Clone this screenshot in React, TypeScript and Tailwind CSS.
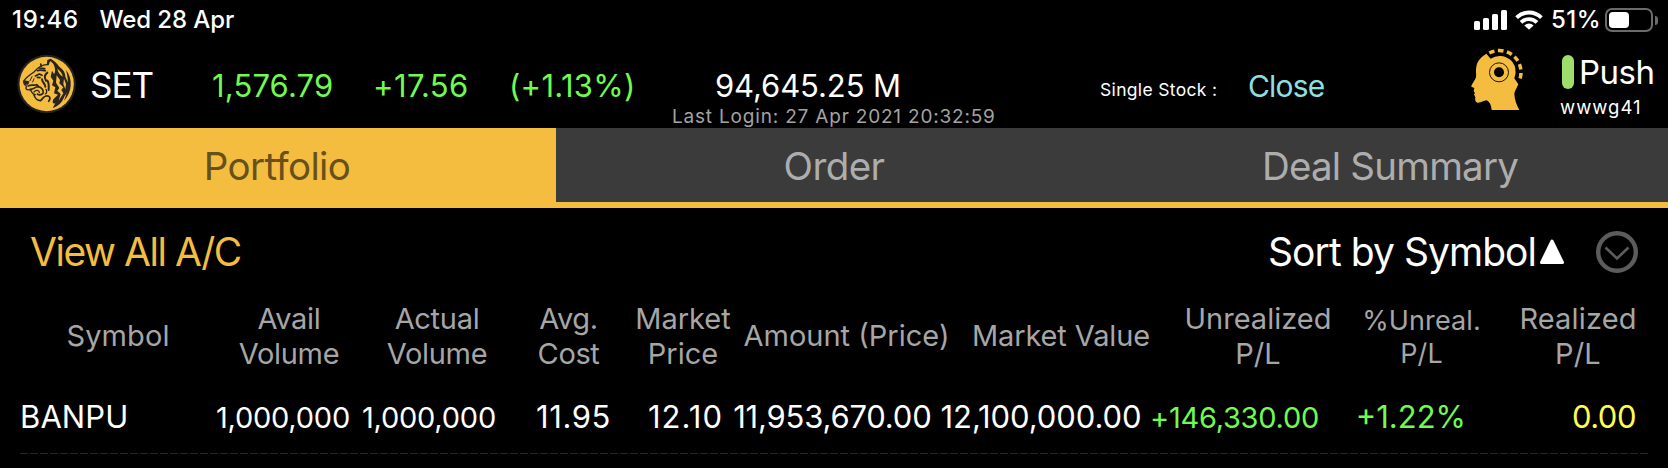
import React from "react";

function TigerLogo() {
  return (
    <svg viewBox="0 0 240 228" className="h-[76px] w-20 shrink-0">
      <circle cx="116" cy="114" r="88" fill="#24211f" />
      <circle cx="116" cy="114" r="81.5" fill="#f4bd40" />
      <g fill="#2a2420">
        <path d="M116 58 L118 42 L128 38 C142 46 148 54 154 62 C166 70 172 80 172 92 L182 114 C182 130 178 140 170 150 C162 170 152 180 134 186 L142 172 C134 174 132 170 136 160 L150 146 L138 142 L142 124 L132 118 L136 104 L128 92 L132 74 L138 84 C142 80 142 72 140 64 C138 54 132 48 126 46 L122 58 Z" />
        <path d="M174 72 C194 96 194 138 168 164 C180 136 184 106 174 72 Z" />
      </g>
      <g fill="#f4bd40">
        <path d="M148 68 C158 76 164 84 164 92 C156 86 150 80 148 68 Z" />
        <path d="M146 88 L156 102 L154 112 L166 124 L160 132 L166 142 L152 164 L158 144 L148 134 L154 126 L144 110 Z" />
        <path d="M168 98 L174 114 L172 130 L166 114 Z" />
      </g>
      <g fill="none" stroke="#2a2420" strokeWidth="4" strokeLinecap="round" strokeLinejoin="round">
        <path d="M116 56 C100 56 88 66 78 78 C66 86 52 96 47 106" strokeWidth="4" />
        <path d="M47 106 C47 112 51 118 55 120 L54 128 C58 134 64 132 70 130" />
        <path d="M49 105 L62 108 L59 114 L52 114 Z" fill="#2a2420" />
        <path d="M60 120 C72 114 80 120 86 116 L92 122 M66 130 C76 132 80 122 90 122 C102 124 108 134 105 142 C98 148 92 148 88 144" strokeWidth="5" />
        <path d="M68 132 C72 142 76 146 82 146 M78 138 C84 130 94 132 94 140" />
        <path d="M78 146 C80 156 88 164 98 164 C104 158 106 152 114 150 C124 148 130 156 122 166" strokeWidth="5" />
        <path d="M94 66 L110 68 M88 74 C96 70 104 74 112 74 M98 54 L100 60" strokeWidth="5" />
        <path d="M82 90 L94 84 L102 88 M88 94 L96 95" strokeWidth="5" />
        <path d="M72 92 L66 104 M78 98 L74 108" strokeWidth="3" />
        <path d="M118 80 C110 86 108 94 114 104 M102 100 C102 110 112 112 112 122 M118 104 C124 112 122 120 122 132" strokeWidth="6" />
        <path d="M114 130 C118 136 116 142 112 144" />
      </g>
    </svg>
  );
}

function HeadIcon() {
  return (
    <svg viewBox="0 0 198 210" className="h-[70px] w-[66px] shrink-0">
      <path
        d="M67 29 L80 44 A48 48 0 0 1 151 103 L163 121 C158 132 152 142 151 150 C152 168 158 184 166 198 L83 198 C82 186 78 174 68 169 C58 169 50 178 40 176 C33 174 33 168 34 160 L30 151 L33 147 L29 142 L31 132 L22 128 C22 122 30 114 36 100 C38 92 34 82 37 68 C40 50 52 38 67 29 Z"
        fill="#f4bd40"
      />
      <path d="M76 27 A65 65 0 0 1 165 112" fill="none" stroke="#f4bd40" strokeWidth="10.5" strokeDasharray="16.5 10.5" />
      <circle cx="105" cy="85" r="28.5" fill="none" stroke="#1c1608" strokeWidth="3" />
      <circle cx="105" cy="85" r="15" fill="#000" />
    </svg>
  );
}

function StatusBar() {
  return (
    <div className="flex h-10 items-center text-2xl leading-10 font-medium text-white">
      <span className="w-[87.5px] pl-3 tracking-[0.72px]">19:46</span>
      <span className="pl-3 tracking-[-0.1px]">Wed 28 Apr</span>
      <div className="ml-auto flex h-10 w-[194px] items-center">
        <svg viewBox="0 0 34 22" className="h-[22px] w-[34px] shrink-0" fill="#fff">
          <rect x="0" y="12" width="6" height="9" rx="1.6" />
          <rect x="9" y="9" width="6" height="12" rx="1.6" />
          <rect x="18" y="5" width="6" height="16" rx="1.6" />
          <rect x="27" y="1" width="6" height="20" rx="1.6" />
        </svg>
        <svg viewBox="0 0 28 20" className="ml-[7px] h-5 w-7 shrink-0" fill="none" stroke="#fff" strokeWidth="3.8">
          <path d="M1.6 7.6 A17.6 17.6 0 0 1 26.4 7.6" />
          <path d="M6 12.4 A11.4 11.4 0 0 1 22 12.4" />
          <path d="M14 19.8 L9.4 15.4 A6.6 6.6 0 0 1 18.6 15.4 Z" fill="#fff" stroke="none" />
        </svg>
        <span className="ml-2 w-[54px] tracking-[0.5px]">51%</span>
        <div className="flex h-6 w-12 shrink-0 items-center rounded-[7px] border-2 border-[#6b6b6b] pl-0.5">
          <div className="h-4 w-5 rounded bg-white" />
        </div>
        <div className="ml-0.5 h-[9px] w-[3px] rounded-r-full bg-[#6b6b6b]" />
      </div>
    </div>
  );
}

function MarketBar() {
  return (
    <div className="flex h-[88px] items-start text-[31px] leading-8 text-[#70fb4e]">
      <div className="flex w-[200px] shrink-0 pt-1.5 pl-2">
        <TigerLogo />
        <span className="pt-[23px] pl-0.5 text-[35px] tracking-[-1px] text-white">SET</span>
      </div>
      <span className="w-[162px] shrink-0 pt-[30px] pl-3 tracking-[0.15px]">1,576.79</span>
      <span className="w-[138px] shrink-0 pt-[30px] pl-[11px] tracking-[0.38px]">+17.56</span>
      <span className="w-40 shrink-0 pt-[30px] pl-[9px] tracking-[0.3px]">(+1.13%)</span>
      <div className="flex w-[430px] shrink-0 flex-col pt-[30px]">
        <span className="pl-[55px] tracking-[-0.1px] text-white">94,645.25 M</span>
        <span className="pl-3 text-[19px] leading-[30px] tracking-[0.81px] text-[#a3a3a3]">
          Last Login: 27 Apr 2021 20:32:59
        </span>
      </div>
      <span className="w-[150px] shrink-0 pt-[34px] pl-2.5 text-[17.5px] tracking-[0.33px] text-white">
        Single Stock :
      </span>
      <span className="w-[224px] shrink-0 pt-[30px] pl-2 text-[30px] tracking-[-0.8px] text-[#8ee0e0]">Close</span>
      <div className="w-[97px] shrink-0 pt-1">
        <HeadIcon />
      </div>
      <div className="flex flex-col pt-[15px] text-white">
        <div className="flex h-[34px] items-center">
          <div className="ml-px h-[34px] w-3 rounded-full bg-[#9fdd6d]" />
          <span className="pl-[5px] text-[33px] tracking-[-0.5px]">Push</span>
        </div>
        <span className="-ml-px pt-0.5 text-[18.5px] tracking-[1px]">wwwg41</span>
      </div>
    </div>
  );
}

function Tabs() {
  return (
    <div className="grid h-20 grid-cols-3 border-b-6 border-[#f4bd40] bg-[#3b3b3b] text-center text-[38.5px] leading-[76px] text-[#adadad]">
      <div className="bg-[#f4bd40] pr-0.5 tracking-[-0.63px] text-[#67501a]">Portfolio</div>
      <div className="tracking-[-0.58px]">Order</div>
      <div className="tracking-[-0.8px]">Deal Summary</div>
    </div>
  );
}

function Toolbar() {
  return (
    <div className="flex h-[88px] items-center pr-[30px] pl-[30px] text-[39px] leading-[88px]">
      <span className="tracking-[-1.45px] text-[#f4bd40]">View All A/C</span>
      <div className="ml-auto flex items-center">
        <span className="tracking-[-0.95px] text-white">Sort by Symbol</span>
        <svg viewBox="0 0 26 28" className="ml-[3px] h-7 w-[26px]">
          <path d="M13 3 L23.5 24.5 H2.5 Z" fill="#fff" stroke="#fff" strokeWidth="3" strokeLinejoin="round" />
        </svg>
        <svg viewBox="0 0 42 42" className="ml-[31px] h-[42px] w-[42px]" fill="none" stroke="#5c5c5c">
          <circle cx="21" cy="21" r="18.8" strokeWidth="4.4" />
          <path d="M9.5 16.5 L21 27.5 L32.5 16.5" strokeWidth="2.6" />
        </svg>
      </div>
    </div>
  );
}

const GRID = "grid grid-cols-[196px_148px_148px_115px_112px_214px_216px_178px_150px_162px] pl-5";

const columns = [
  { lines: ["Symbol"], style: "tracking-[0.11px]" },
  { lines: ["Avail", "Volume"], style: "pr-0.5 tracking-[-0.3px]" },
  { lines: ["Actual", "Volume"], style: "pr-0.5 tracking-[-0.3px]" },
  { lines: ["Avg.", "Cost"], style: "pr-0.5 tracking-[-0.4px]" },
  { lines: ["Market", "Price"], style: "" },
  { lines: ["Amount (Price)"], style: "pl-px" },
  { lines: ["Market Value"], style: "tracking-[-0.11px]" },
  { lines: ["Unrealized", "P/L"], style: "" },
  { lines: ["%Unreal.", "P/L"], style: "pr-px text-[27px] leading-[33px] tracking-[0.1px]" },
  { lines: ["Realized", "P/L"], style: "tracking-[0.15px]" },
];

const cells = [
  { value: "BANPU", style: "tracking-[0.1px] text-white" },
  { value: "1,000,000", style: "justify-end pr-3.5 pt-0.5 text-[29px] tracking-[-0.22px] text-white" },
  { value: "1,000,000", style: "justify-end pr-4 pt-0.5 text-[29px] tracking-[-0.22px] text-white" },
  { value: "11.95", style: "justify-end pr-4 tracking-[0.58px] text-white" },
  { value: "12.10", style: "justify-end pr-4 tracking-[1.03px] text-white" },
  { value: "11,953,670.00", style: "justify-end pr-[21.5px] tracking-[-0.2px] text-white" },
  { value: "12,100,000.00", style: "justify-end pr-[27.5px] tracking-[-0.08px] text-white" },
  { value: "+146,330.00", style: "justify-end pr-7 pt-0.5 text-[29px] tracking-[-0.26px] text-[#70fb4e]" },
  { value: "+1.22%", style: "justify-end pr-[31px] text-[#70fb4e]" },
  { value: "0.00", style: "justify-end pr-[23px] tracking-[-0.49px] text-[#fffd54]" },
];

function Holdings() {
  return (
    <div>
      <div className={`${GRID} h-20 items-center pt-px text-center text-[29px] leading-[34.5px] text-[#a6a6a6]`}>
        {columns.map((c, i) => (
          <div key={i} className={`whitespace-nowrap ${c.style}`}>
            {c.lines.map((l) => (
              <div key={l}>{l}</div>
            ))}
          </div>
        ))}
      </div>
      <div className={`${GRID} h-[77px] items-center pt-[5px] text-[31px] leading-10`}>
        {cells.map((c, i) => (
          <div key={i} className={`flex whitespace-nowrap ${c.style}`}>
            <span>{c.value}</span>
          </div>
        ))}
      </div>
      <div className="mx-5 h-px bg-[repeating-linear-gradient(90deg,#262626_0px,#262626_8px,transparent_8px,transparent_10px)]" />
    </div>
  );
}

export default function App() {
  return (
    <div className="h-[468px] w-[1668px] overflow-hidden bg-black font-['Inter',sans-serif]">
      <StatusBar />
      <MarketBar />
      <Tabs />
      <Toolbar />
      <Holdings />
    </div>
  );
}
